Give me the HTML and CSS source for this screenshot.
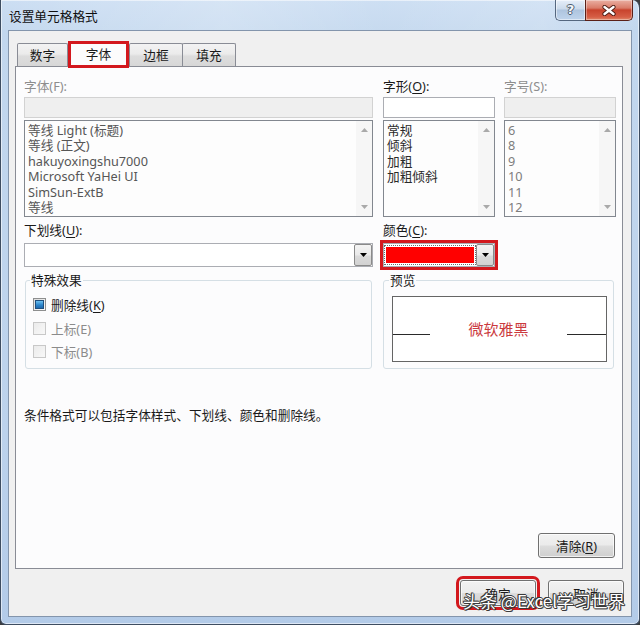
FILE: index.html
```html
<!DOCTYPE html>
<html lang="zh-CN">
<head>
<meta charset="utf-8">
<title>设置单元格格式</title>
<link rel="stylesheet" href="styles.css">
</head>
<body>
<div class="window">
  <div class="titlebar">
    <span class="title">设置单元格格式</span>
    <div class="caption">
      <div class="cap-help">?</div>
      <div class="cap-close">
        <svg width="14" height="11" viewBox="0 0 14 11"><path d="M2.5 2 L11.5 9 M11.5 2 L2.5 9" stroke="#4a1c14" stroke-width="4.2" stroke-linecap="round"/><path d="M2.5 2 L11.5 9 M11.5 2 L2.5 9" stroke="#ffffff" stroke-width="2.4" stroke-linecap="round"/></svg>
      </div>
    </div>
  </div>
  <div class="client">
    <div class="tabs">
      <div class="tab t1">数字</div>
      <div class="tab sel">字体</div>
      <div class="tab t3">边框</div>
      <div class="tab t4">填充</div>
    </div>
    <div class="panel">
      <div class="cols">
        <div class="col c-font">
          <div class="lbl dis">字体(F):</div>
          <div class="inbox gray"></div>
          <div class="list">
            <div class="items font-items">
              <div>等线 Light (标题)</div>
              <div>等线 (正文)</div>
              <div>hakuyoxingshu7000</div>
              <div>Microsoft YaHei UI</div>
              <div>SimSun-ExtB</div>
              <div>等线</div>
            </div>
            <div class="sbar">
              <svg width="7" height="4" viewBox="0 0 7 4"><path d="M0 4 L3.5 0 L7 4Z" fill="#a9a9a9"/></svg>
              <svg width="7" height="4" viewBox="0 0 7 4"><path d="M0 0 L3.5 4 L7 0Z" fill="#a9a9a9"/></svg>
            </div>
          </div>
          <div class="lbl lbl2">下划线(<u>U</u>):</div>
          <div class="combo">
            <span class="combo-val"></span>
            <div class="drop"><svg width="7" height="4" viewBox="0 0 7 4"><path d="M0 0 L3.5 4 L7 0Z" fill="#000"/></svg></div>
          </div>
        </div>
        <div class="col c-style">
          <div class="lbl">字形(<u>O</u>):</div>
          <div class="inbox white"></div>
          <div class="list">
            <div class="items style-items">
              <div>常规</div>
              <div>倾斜</div>
              <div>加粗</div>
              <div>加粗倾斜</div>
            </div>
            <div class="sbar">
              <svg width="7" height="4" viewBox="0 0 7 4"><path d="M0 4 L3.5 0 L7 4Z" fill="#a9a9a9"/></svg>
              <svg width="7" height="4" viewBox="0 0 7 4"><path d="M0 0 L3.5 4 L7 0Z" fill="#a9a9a9"/></svg>
            </div>
          </div>
          <div class="lbl lbl2">颜色(<u>C</u>):</div>
          <div class="combo color-combo">
            <span class="swatch"></span>
            <div class="drop"><svg width="7" height="4" viewBox="0 0 7 4"><path d="M0 0 L3.5 4 L7 0Z" fill="#000"/></svg></div>
          </div>
        </div>
        <div class="col c-size">
          <div class="lbl dis">字号(S):</div>
          <div class="inbox gray"></div>
          <div class="list">
            <div class="items size-items">
              <div>6</div>
              <div>8</div>
              <div>9</div>
              <div>10</div>
              <div>11</div>
              <div>12</div>
            </div>
            <div class="sbar">
              <svg width="7" height="4" viewBox="0 0 7 4"><path d="M0 4 L3.5 0 L7 4Z" fill="#a9a9a9"/></svg>
              <svg width="7" height="4" viewBox="0 0 7 4"><path d="M0 0 L3.5 4 L7 0Z" fill="#a9a9a9"/></svg>
            </div>
          </div>
        </div>
      </div>
      <div class="groups">
        <fieldset class="grp effects">
          <legend>特殊效果</legend>
          <div class="chk-row"><span class="chk on"><span class="mark"></span></span><span>删除线(<u>K</u>)</span></div>
          <div class="chk-row dis"><span class="chk"></span><span>上标(E)</span></div>
          <div class="chk-row dis"><span class="chk"></span><span>下标(B)</span></div>
        </fieldset>
        <fieldset class="grp preview">
          <legend>预览</legend>
          <div class="pv-box">
            <span class="pv-line pv-left"></span>
            <span class="pv-text">微软雅黑</span>
            <span class="pv-line pv-right"></span>
          </div>
        </fieldset>
      </div>
      <p class="note">条件格式可以包括字体样式、下划线、颜色和删除线。</p>
      <div class="clear-row"><button class="btn clear">清除(<u>R</u>)</button></div>
    </div>
    <div class="footer">
      <button class="btn ok">确定</button>
      <button class="btn cancel">取消</button>
    </div>
    <div class="watermark">头条 @Excel学习世界</div>
  </div>
</div>
</body>
</html>
```

FILE: styles.css
```css
* { box-sizing: border-box; }

body {
  margin: 0;
  background: #3b3d40;
  font-family: "Noto Sans", "Noto Sans CJK SC", sans-serif;
  font-size: 12.7px;
  color: #1a1a1a;
}

u { text-decoration: underline; text-underline-offset: 2px; }

.window {
  width: 640px;
  height: 625px;
  border: 1px solid #3e4d61;
  border-top: none;
  border-radius: 0 8px 6px 6px;
  background: linear-gradient(180deg, #c9dcf2 0px, #c2d7ee 30px, #bcd2ec 70%, #b3cbe8 100%);
  box-shadow: inset 0 0 0 1px rgba(255, 255, 255, 0.55);
  overflow: hidden;
  display: flex;
  flex-direction: column;
}

.titlebar {
  height: 30px;
  display: flex;
  align-items: flex-start;
  padding-left: 8px;
  background: linear-gradient(90deg, rgba(255,255,255,0.05) 0%, rgba(255,255,255,0.25) 35%, rgba(255,255,255,0.08) 60%, rgba(255,255,255,0.2) 85%, rgba(255,255,255,0) 100%);
}

.title {
  margin-top: 8px;
  line-height: 16px;
  color: #101010;
}

.caption {
  margin-left: auto;
  margin-right: 6px;
  display: flex;
}

.cap-help {
  width: 30px;
  height: 21px;
  border: 1px solid #55677f;
  border-top: none;
  border-right: none;
  border-radius: 0 0 0 5px;
  background: linear-gradient(180deg, #e6eef8 0%, #cbdaeb 45%, #aec4de 50%, #bfd4ec 100%);
  box-shadow: inset 0 0 0 1px rgba(255,255,255,0.5);
  color: #f4f7fb;
  font-family: "DejaVu Sans", sans-serif;
  font-weight: bold;
  font-size: 13px;
  line-height: 20px;
  text-align: center;
  text-shadow: 1px 0 0 #4c5a6c, -1px 0 0 #4c5a6c, 0 1px 0 #4c5a6c, 0 -1px 0 #4c5a6c;
}

.cap-close {
  width: 48px;
  height: 21px;
  border: 1px solid #5a2018;
  border-top: none;
  border-radius: 0 0 5px 0;
  background: linear-gradient(180deg, #eab0a3 0%, #d97c69 40%, #c8432d 50%, #d65e45 85%, #e08a6c 100%);
  box-shadow: inset 0 0 0 1px rgba(255,255,255,0.35);
  display: flex;
  align-items: center;
  justify-content: center;
}

.client {
  position: relative;
  margin: 0 7px;
  width: 624px;
  height: 587px;
  border: 1px solid #8395ac;
  background: #f0f0f0;
}

/* tabs */
.tabs {
  position: relative;
  z-index: 1;
  display: flex;
  align-items: flex-end;
  height: 25px;
  margin-top: 10px;
  padding-left: 8px;
}

.tab {
  height: 23px;
  border: 1px solid #898c95;
  border-bottom: none;
  border-radius: 2px 2px 0 0;
  background: linear-gradient(180deg, #f3f3f3 0%, #ebebeb 45%, #dddddd 55%, #d7d7d7 100%);
  text-align: center;
  line-height: 22px;
  color: #1a1a1a;
}

.t1 { width: 51px; }
.t3 { width: 54px; }
.t4 { width: 54px; margin-left: -1px; }

.tab.sel {
  width: 61px;
  height: 27px;
  margin-bottom: -2px;
  border: 3px solid #d3181d;
  border-radius: 0;
  background: #fcfcfc;
  line-height: 20px;
}

/* panel */
.panel {
  margin-left: 6px;
  width: 608px;
  height: 503px;
  border: 1px solid #898c95;
  background: #fcfcfd;
  padding: 11px 6px 0 8px;
}

.cols { display: flex; }
.c-font { width: 349px; }
.c-style { width: 112px; margin-left: 10px; }
.c-size { width: 112px; margin-left: 9px; }

.col { display: flex; flex-direction: column; }

.lbl {
  height: 16px;
  line-height: 16px;
  color: #1a1a1a;
}
.lbl.dis { color: #8d8d8d; }
.lbl2 { margin-top: 5px; }

.inbox {
  margin-top: 3px;
  height: 21px;
  border: 1px solid #abadb3;
}
.inbox.gray { background: #efefef; border-color: #d2d2d2; }
.inbox.white { background: #ffffff; border-color: #abadb3; }

.list {
  margin-top: 2px;
  height: 97px;
  border: 1px solid #82878f;
  background: #fdfdfd;
  display: flex;
}

.items {
  flex: 1;
  padding: 2px 0 0 3px;
  line-height: 15.4px;
  white-space: nowrap;
  overflow: hidden;
}
.items div { height: 15.4px; }
.font-items { color: #565656; }
.style-items { color: #2a2a2a; }
.size-items { color: #7e7e7e; }

.sbar {
  width: 16px;
  background: #f6f6f6;
  display: flex;
  flex-direction: column;
  justify-content: space-between;
  align-items: center;
  padding: 7px 0 7px;
}

.combo {
  margin-top: 5px;
  height: 24px;
  border: 1px solid #abadb3;
  background: #ffffff;
  display: flex;
  align-items: center;
}
.combo-val { flex: 1; }

.drop {
  margin-left: auto;
  width: 18px;
  height: 22px;
  border: 1px solid #8a8a8a;
  border-radius: 2px;
  background: linear-gradient(180deg, #f4f4f4 0%, #e9e9e9 50%, #dadada 55%, #d2d2d2 100%);
  display: flex;
  align-items: center;
  justify-content: center;
}

.color-combo {
  padding-left: 2px;
  outline: 3px solid #d3181d;
}

.swatch {
  width: 88px;
  height: 16px;
  background: #ff0000;
  outline: 1px dotted #6a6a6a;
  outline-offset: 1px;
}

/* group boxes */
.groups {
  display: flex;
  margin-top: 5px;
}

.grp {
  margin: 0;
  padding: 0;
  height: 97px;
  border: 1px solid #d5dfe5;
  border-radius: 3px;
  min-width: 0;
}

.grp legend {
  padding: 0 1px;
  line-height: 16px;
  color: #1a1a1a;
}

.effects { width: 347px; margin-left: 1px; padding-top: 5px; }
.effects legend { margin-left: 4px; }

.preview { width: 231px; margin-left: 11px; }
.preview legend { margin-left: 5px; }

.chk-row {
  height: 23.5px;
  display: flex;
  align-items: center;
  padding-left: 7px;
}
.chk-row.dis { color: #8b8b8b; }

.chk {
  width: 13px;
  height: 13px;
  margin-right: 5px;
  border: 1px solid #c8c8c8;
  background: linear-gradient(135deg, #ebebeb, #f8f8f8);
  padding: 1px;
}

.chk.on {
  border-color: #8e8f8f;
  background: linear-gradient(135deg, #dcdcdc, #fbfbfb);
}

.chk .mark {
  display: block;
  width: 9px;
  height: 9px;
  border: 1px solid #1f4f7e;
  background: linear-gradient(180deg, #6cc0f0 0%, #2d86cc 55%, #1d68ad 100%);
}

.pv-box {
  margin: 8px 6px 0 8px;
  height: 66px;
  border: 1px solid #656565;
  background: #ffffff;
  display: flex;
  align-items: center;
}

.pv-line {
  align-self: flex-start;
  margin-top: 37px;
  height: 1px;
  background: #2a2a2a;
}
.pv-left { width: 37px; }
.pv-right { width: 39px; }

.pv-text {
  flex: 1;
  text-align: center;
  color: #cb3a3e;
  font-size: 15px;
  margin-top: -1px;
}

.note {
  margin: 38px 0 0 0;
  line-height: 16px;
  color: #1a1a1a;
}

.clear-row {
  margin-top: 110px;
  display: flex;
  justify-content: flex-end;
  padding-right: 1px;
}

.btn {
  font-family: inherit;
  font-size: 12.7px;
  color: #1a1a1a;
  border: 1px solid #707070;
  border-radius: 3px;
  background: linear-gradient(180deg, #f2f2f2 0%, #ebebeb 48%, #dddddd 52%, #cfcfcf 100%);
  box-shadow: inset 0 0 0 1px rgba(255,255,255,0.7);
  padding: 0;
}

.clear { width: 77px; height: 25px; }

.footer {
  margin-top: 11px;
  display: flex;
  justify-content: flex-end;
  gap: 12px;
  padding-right: 7px;
}

.footer .btn { width: 76px; height: 26px; }

.ok {
  outline: 3px solid #d3181d;
  outline-offset: 1px;
}

.watermark {
  position: absolute;
  left: 454px;
  top: 559px;
  font-family: "Noto Sans CJK SC", "Noto Sans", sans-serif;
  font-size: 17px;
  line-height: 22px;
  color: #ffffff;
  white-space: nowrap;
  text-shadow: 1px 0 0 #3a3a3a, -1px 0 0 #3a3a3a, 0 1px 0 #3a3a3a, 0 -1px 0 #3a3a3a, 1px 1px 0 #3a3a3a, -1px -1px 0 #3a3a3a;
}
```
